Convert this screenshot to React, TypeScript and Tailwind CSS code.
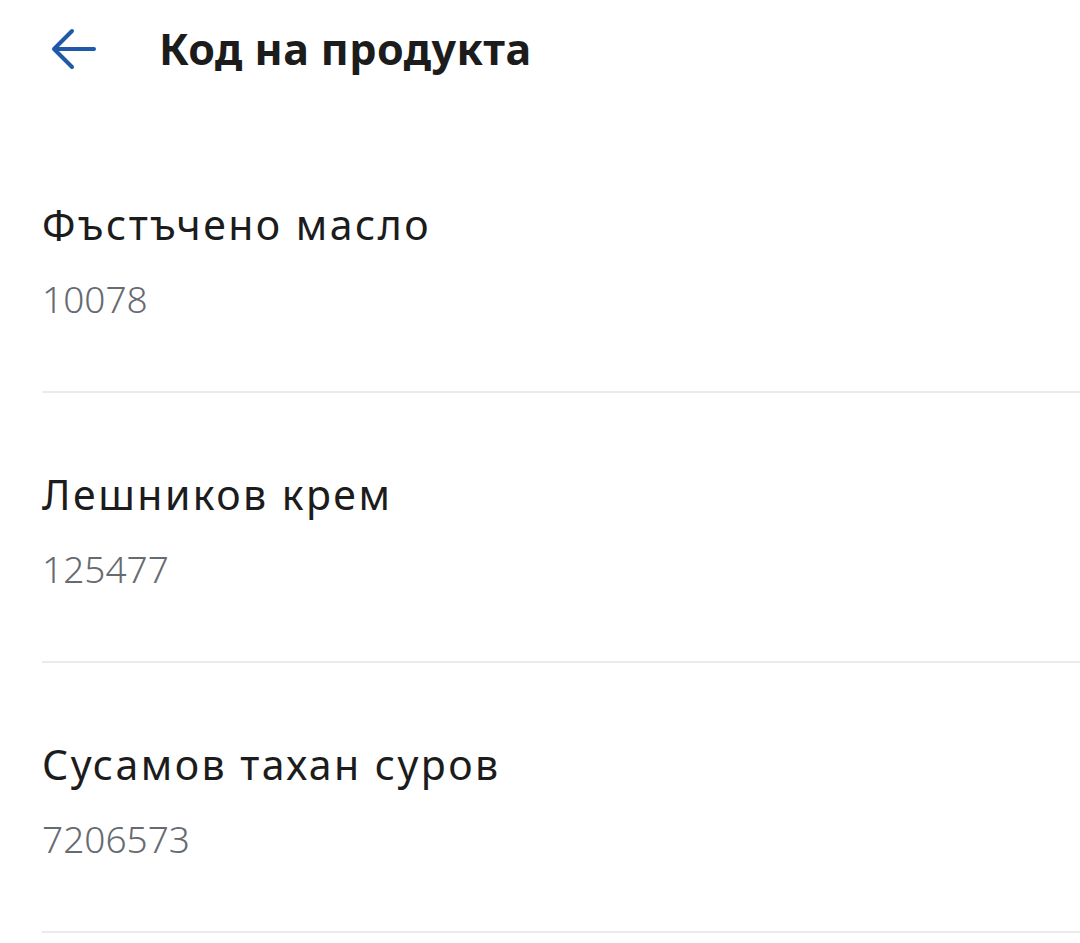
import React from 'react';

const items = [
    { name: 'Фъстъчено масло', code: '10078' },
    { name: 'Лешников крем', code: '125477' },
    { name: 'Сусамов тахан суров', code: '7206573' },
];

const App: React.FC = () => {
    return (
        <div lang="bg" className="min-h-screen bg-white" style={{ fontFamily: '"Noto Sans", "Open Sans", sans-serif' }}>
            <header className="flex items-center h-[98px] pl-[51px]">
                <svg width="46" height="42" viewBox="0 0 46 42" fill="none" stroke="#1e5aa8" strokeWidth="4" strokeLinecap="round" strokeLinejoin="round">
                    <path d="M43 21H4" />
                    <path d="M21 3L3 21l18 18" />
                </svg>
                <h1 className="ml-[62px] text-[43px] leading-[52px] font-bold tracking-[0.01em] text-[#1c1c1c]">Код на продукта</h1>
            </header>
            <div className="pl-[42px] pt-[100px]">
                {items.map((item) => (
                    <div key={item.code} className="border-b-2 border-[#ebebeb] pt-[75px] first:pt-0 pb-[70px]">
                        <div className="text-[41px] leading-[52px] tracking-[0.06em] text-[#1c1c1c]">{item.name}</div>
                        <div className="mt-[27px] text-[37px] leading-[44px] font-light text-[#666b71]">{item.code}</div>
                    </div>
                ))}
            </div>
        </div>
    );
};

export default App;
